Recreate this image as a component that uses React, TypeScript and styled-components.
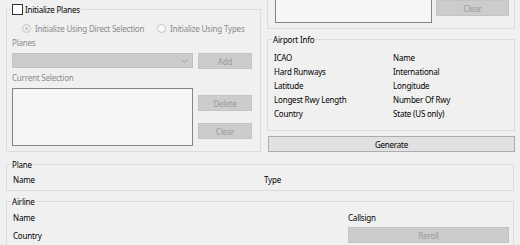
import React from "react";
import styled, { createGlobalStyle } from "styled-components";

const Global = createGlobalStyle`
  html, body { margin: 0; padding: 0; background: #f0f0f0; }
  body { font-family: "Noto Sans", "DejaVu Sans", sans-serif; font-size: 8px; letter-spacing: -0.2px; color: #000; }
  * { box-sizing: border-box; }
`;

const Page = styled.div`
  width: 520px;
  height: 245px;
  overflow: hidden;
  background: #f0f0f0;
  display: flex;
  flex-direction: column;
`;

const Top = styled.div`
  display: flex;
  gap: 6px;
  padding-left: 6px;
  align-items: flex-start;
`;

const Group = styled.fieldset<{ $w?: number; $mt?: number }>`
  margin: ${(p) => p.$mt ?? 0}px 0 0 0;
  padding: 0;
  border: 1px solid #dcdcdc;
  border-radius: 0;
  min-width: 0;
  ${(p) => (p.$w ? `width: ${p.$w}px;` : "")}
`;

const Legend = styled.legend`
  margin-left: 4px;
  padding: 0 1px;
  height: 11px;
  line-height: 11px;
  display: flex;
  align-items: center;
  gap: 2px;
  color: #000;
`;

const CheckBox = styled.span`
  display: inline-block;
  width: 11px;
  height: 11px;
  border: 1px solid #333;
  background: #fff;
`;

const LeftInner = styled.div`
  display: flex;
  flex-direction: column;
  padding: 0 7px 5px 5px;
`;

const RadioRow = styled.div`
  display: flex;
  align-items: center;
  height: 12px;
  margin-top: 7px;
  padding-left: 10px;
`;

const Radio = styled.label<{ $w?: number }>`
  display: flex;
  align-items: center;
  gap: 4px;
  color: #8a8a8a;
  ${(p) => (p.$w ? `width: ${p.$w}px;` : "")}
`;

const RadioDot = styled.span<{ $on?: boolean }>`
  width: 9px;
  height: 9px;
  border-radius: 50%;
  border: 1px solid #c4c4c4;
  background: ${(p) => (p.$on ? "#f0f0f0" : "#fafafa")};
  display: flex;
  align-items: center;
  justify-content: center;
  &::after {
    content: "";
    width: 3px;
    height: 3px;
    border-radius: 50%;
    background: ${(p) => (p.$on ? "#c4c4c4" : "transparent")};
  }
`;

const FieldLabel = styled.div<{ $mt: number }>`
  color: #8a8a8a;
  height: 10px;
  line-height: 10px;
  margin-top: ${(p) => p.$mt}px;
`;

const Row = styled.div<{ $mt: number }>`
  display: flex;
  gap: 5px;
  margin-top: ${(p) => p.$mt}px;
  align-items: flex-start;
`;

const Combo = styled.div`
  width: 181px;
  height: 15px;
  background: #cccccc;
  border: 1px solid #c2c2c2;
  display: flex;
  align-items: center;
  justify-content: flex-end;
  padding-right: 4px;
`;

const Button = styled.button<{ $w?: number; $h?: number; $disabled?: boolean }>`
  font-family: inherit;
  font-size: 8px;
  letter-spacing: -0.2px;
  padding: 0;
  margin: 0;
  width: ${(p) => (p.$w ? `${p.$w}px` : "100%")};
  height: ${(p) => p.$h ?? 16}px;
  background: ${(p) => (p.$disabled ? "#cccccc" : "#e1e1e1")};
  border: 1px solid ${(p) => (p.$disabled ? "#c4c4c4" : "#adadad")};
  color: ${(p) => (p.$disabled ? "#9b9b9b" : "#000")};
  border-radius: 0;
`;

const ListBox = styled.div<{ $w: number; $h: number }>`
  width: ${(p) => p.$w}px;
  height: ${(p) => p.$h}px;
  background: #f6f6f6;
  border: 1px solid #858585;
`;

const ButtonCol = styled.div`
  display: flex;
  flex-direction: column;
  gap: 12px;
  padding-top: 7px;
`;

const RightCol = styled.div`
  width: 248px;
  display: flex;
  flex-direction: column;
`;

const TopGroup = styled.div`
  height: 70px;
  margin-top: -41px;
  border: 1px solid #dcdcdc;
  display: flex;
  align-items: flex-end;
  padding: 0 5px 5px 7px;
  gap: 4px;
`;

const InfoGrid = styled.div<{ $cols: string; $pt: number; $pb: number; $rh: number }>`
  display: grid;
  grid-template-columns: ${(p) => p.$cols};
  grid-auto-rows: ${(p) => p.$rh}px;
  align-items: center;
  padding: ${(p) => p.$pt}px 0 ${(p) => p.$pb}px 6px;
`;

const Cell = styled.div`
  white-space: nowrap;
`;

const Bottom = styled.div`
  display: flex;
  flex-direction: column;
  padding: 0 6px;
  margin-top: 7px;
`;

const Chevron = () => (
  <svg width="7" height="4" viewBox="0 0 7 4">
    <path d="M0.5 0.5 L3.5 3.5 L6.5 0.5" fill="none" stroke="#a0a0a0" strokeWidth="1" />
  </svg>
);

export default function App() {
  return (
    <>
      <Global />
      <Page>
        <Top>
          <Group $w={255} $mt={4}>
            <Legend>
              <CheckBox />
              <span>Initialize Planes</span>
            </Legend>
            <LeftInner>
              <RadioRow>
                <Radio $w={135}>
                  <RadioDot $on />
                  <span>Initialize Using Direct Selection</span>
                </Radio>
                <Radio>
                  <RadioDot />
                  <span>Initialize Using Types</span>
                </Radio>
              </RadioRow>
              <FieldLabel $mt={4}>Planes</FieldLabel>
              <Row $mt={5}>
                <Combo>
                  <Chevron />
                </Combo>
                <Button $w={54} $disabled>Add</Button>
              </Row>
              <FieldLabel $mt={4}>Current Selection</FieldLabel>
              <Row $mt={5}>
                <ListBox $w={181} $h={58} />
                <ButtonCol>
                  <Button $w={54} $disabled>Delete</Button>
                  <Button $w={54} $disabled>Clear</Button>
                </ButtonCol>
              </Row>
            </LeftInner>
          </Group>
          <RightCol>
            <TopGroup>
              <ListBox $w={157} $h={45} />
              <Button $w={73} $h={16} $disabled style={{ marginBottom: 7 }}>Clear</Button>
            </TopGroup>
            <Group $mt={5}>
              <Legend>Airport Info</Legend>
              <InfoGrid $cols="119px 1fr" $pt={5} $pb={10} $rh={14}>
                <Cell>ICAO</Cell>
                <Cell>Name</Cell>
                <Cell>Hard Runways</Cell>
                <Cell>International</Cell>
                <Cell>Latitude</Cell>
                <Cell>Longitude</Cell>
                <Cell>Longest Rwy Length</Cell>
                <Cell>Number Of Rwy</Cell>
                <Cell>Country</Cell>
                <Cell>State (US only)</Cell>
              </InfoGrid>
            </Group>
            <Button $h={16} style={{ marginTop: 5, marginLeft: 1, width: 247 }}>Generate</Button>
          </RightCol>
        </Top>
        <Bottom>
          <Group>
            <Legend>Plane</Legend>
            <InfoGrid $cols="251px 1fr" $pt={2} $pb={4} $rh={14}>
              <Cell>Name</Cell>
              <Cell>Type</Cell>
            </InfoGrid>
          </Group>
          <Group $mt={5}>
            <Legend>Airline</Legend>
            <InfoGrid $cols="335px 161px" $pt={1} $pb={2} $rh={18}>
              <Cell>Name</Cell>
              <Cell>Callsign</Cell>
              <Cell>Country</Cell>
              <Button $h={16} $disabled>Reroll</Button>
            </InfoGrid>
          </Group>
        </Bottom>
      </Page>
    </>
  );
}
